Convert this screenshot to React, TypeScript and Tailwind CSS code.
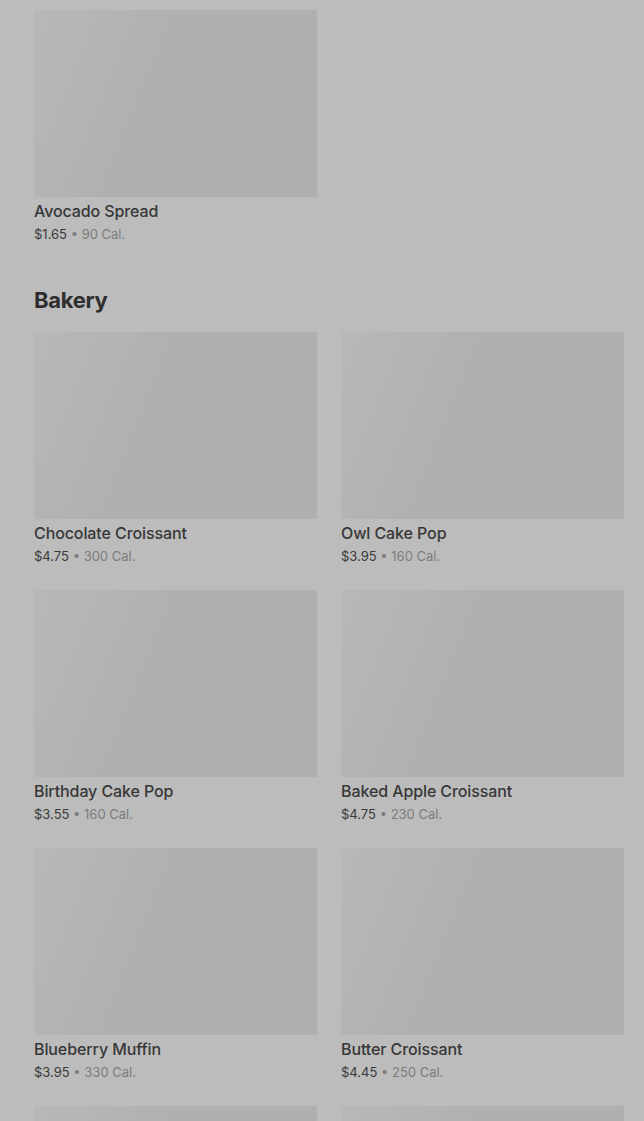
import React from 'react'

type Item = { name: string; price: string; cal: string }

const TOP: Item[] = [{ name: 'Avocado Spread', price: '$1.65', cal: '90 Cal.' }]

const BAKERY: Item[] = [
  { name: 'Chocolate Croissant', price: '$4.75', cal: '300 Cal.' },
  { name: 'Owl Cake Pop', price: '$3.95', cal: '160 Cal.' },
  { name: 'Birthday Cake Pop', price: '$3.55', cal: '160 Cal.' },
  { name: 'Baked Apple Croissant', price: '$4.75', cal: '230 Cal.' },
  { name: 'Blueberry Muffin', price: '$3.95', cal: '330 Cal.' },
  { name: 'Butter Croissant', price: '$4.45', cal: '250 Cal.' },
  { name: 'Cheese Danish', price: '$3.75', cal: '290 Cal.' },
  { name: 'Banana Nut Bread', price: '$3.75', cal: '420 Cal.' },
]

function ItemCard({ item }: { item: Item }) {
  return (
    <div className="flex flex-col">
      <div className="h-[187px] w-full bg-[linear-gradient(112deg,#b8b8b8_0%,#b4b4b4_22%,#b0b0b0_40%,#afafaf_100%)]" />
      <p className="mt-0.5 text-[16px] font-medium leading-6 tracking-[-0.1px] text-[#373737]">{item.name}</p>
      <p className="pt-px text-[13px] leading-5 text-[#3a3a3a]">
        {item.price}
        <span className="text-[#7d7d7d]"> • {item.cal}</span>
      </p>
    </div>
  )
}

export default function App() {
  return (
    <div
      className="h-[1121px] w-full overflow-hidden bg-[#bcbcbc] pl-[34px] pr-[20px] pt-[10px]"
      style={{ fontFamily: 'Inter, "Noto Sans", "Liberation Sans", sans-serif' }}
    >
      <div className="grid grid-cols-2 gap-x-6 gap-y-6">
        {TOP.map((item) => (
          <ItemCard key={item.name} item={item} />
        ))}
      </div>

      {/* Bakery */}
      <h2 className="mt-10 mb-4 text-[22px] font-bold leading-8 tracking-[-0.3px] text-[#2e2e2e]">Bakery</h2>
      <div className="grid grid-cols-2 gap-x-6 gap-y-6">
        {BAKERY.map((item) => (
          <ItemCard key={item.name} item={item} />
        ))}
      </div>
    </div>
  )
}
